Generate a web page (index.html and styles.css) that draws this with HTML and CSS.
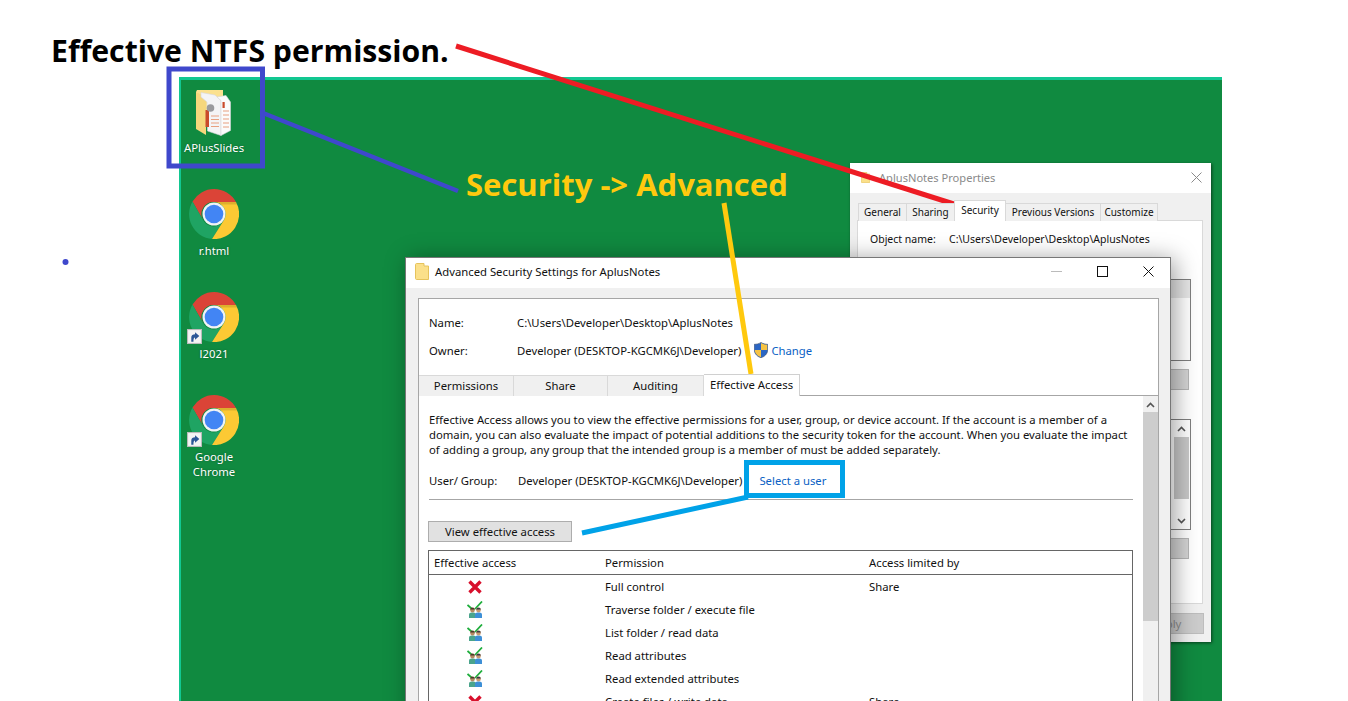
FILE: index.html
```html
<!DOCTYPE html>
<html lang="en">
<head>
<meta charset="utf-8">
<title>Effective NTFS permission</title>
<link rel="stylesheet" href="styles.css">
</head>
<body>
<svg class="defs" width="0" height="0" aria-hidden="true">
  <defs>
    <symbol id="chrome" viewBox="0 0 50 50">
      <path fill="#db4437" d="M25 0A25 25 0 0 1 47 13H25A12 12 0 0 0 14 31L3.5 12.5A25 25 0 0 1 25 0Z"/>
      <path fill="#1fa463" d="M3.5 12.500A25 25 0 0 0 23 50L33 34A12 12 0 0 1 14 31Z"/>
      <path fill="#fcc934" d="M47 13A25 25 0 0 1 23 50L35 31A12 12 0 0 0 25 13Z"/>
      <path fill="#000" opacity=".12" d="M25 13H47L48 15.500H32Z"/>
      <circle cx="25" cy="25" r="11.500" fill="#f1f3f4"/>
      <circle cx="25" cy="25" r="9.300" fill="#4285f4"/>
    </symbol>
    <symbol id="shortcut" viewBox="0 0 14 14">
      <rect x=".5" y=".5" width="13" height="13" fill="#f4f4f4" stroke="#bbb"/>
      <path fill="#2b5797" d="M4 12V8C4 6 5.500 5 7.500 5V3L11.500 6.500L7.500 10V8C6.500 8 6 9 6 12Z"/>
    </symbol>
    <symbol id="deny" viewBox="0 0 14 14">
      <path fill="none" stroke="#d8102c" stroke-width="3.400" d="M1.500 1.500L12.500 12.500M12.500 1.500L1.500 12.500"/>
    </symbol>
    <symbol id="allow" viewBox="0 0 16 17">
      <path fill="none" stroke="#1fae3c" stroke-width="1.800" d="M.5 4L4.500 7.500M8 8L15 .5"/>
      <path fill="#4aa48c" d="M2 17V13.500C2 12 3.500 11.500 5.500 11.500S9 12 9 13.500V17Z"/>
      <path fill="#3d8fd6" d="M8 17V13.500C8 12 9.500 11.500 11.500 11.500S15 12 15 13.500V17Z"/>
      <circle cx="5.500" cy="9" r="2.400" fill="#b58a62"/>
      <path fill="#4a3a2c" d="M3.200 8.500C3.200 6 7.800 6 7.800 8.500Z"/>
      <circle cx="11.500" cy="9" r="2.400" fill="#c79a70"/>
      <path fill="#3a3a46" d="M9.200 8.500C9.200 6 13.800 6 13.800 8.500Z"/>
    </symbol>
    <symbol id="folder-small" viewBox="0 0 14 17">
      <path fill="#fbe08a" stroke="#e6c35c" d="M.5 1.500C.5 1 1 .5 1.500 .5H9V3H13.500V16.500H1.500C1 16.500 .5 16 .5 15.500Z"/>
    </symbol>
  </defs>
</svg>

<main class="slide">
  <h1 class="headline">Effective NTFS permission.</h1>

  <section class="desktop">
    <ul class="icons">
      <li class="icon icon-folder">
        <svg class="folder-art" viewBox="0 0 36 46" width="36" height="46" aria-hidden="true">
          <path fill="#fbe18f" d="M0 2L1 0H27V33H0Z"/>
          <path fill="#f6d77c" d="M0 2L10 7V45L0 39Z"/>
          <path fill="#f4f4f6" stroke="#d6d6da" stroke-width=".6" d="M5 2.500L19 5L25 10.500V45.500L11.500 41L11 12L5 7Z"/>
          <path fill="#fbfbfb" stroke="#d6d6da" stroke-width=".6" d="M21 7L30 5.500L34.500 12V40.500L25 45.500V10.500Z"/>
          <rect x="9.500" y="20" width="3.500" height="17" fill="#c94a2c"/>
          <circle cx="14.500" cy="18" r="3.800" fill="#9a9a9e"/>
          <path stroke="#e8a080" stroke-width="1.100" d="M15 26H23M15 29.500H23M15 33H23M15 36.500H23M27 21H33M27 25H33M27 29H33M27 33H33M27 37H33"/>
          <rect x="26.500" y="12" width="2.200" height="6" fill="#c94a2c"/>
        </svg>
        <span class="icon-label">APlusSlides</span>
      </li>
      <li class="icon">
        <svg class="chrome-art"><use href="#chrome"/></svg>
        <span class="icon-label">r.html</span>
      </li>
      <li class="icon">
        <svg class="chrome-art"><use href="#chrome"/></svg>
        <svg class="shortcut"><use href="#shortcut"/></svg>
        <span class="icon-label">l2021</span>
      </li>
      <li class="icon">
        <svg class="chrome-art"><use href="#chrome"/></svg>
        <svg class="shortcut"><use href="#shortcut"/></svg>
        <span class="icon-label">Google<br>Chrome</span>
      </li>
    </ul>

    <article class="window props">
      <header class="titlebar props-bar">
        <svg class="props-folder"><use href="#folder-small"/></svg>
        <span class="props-title">AplusNotes Properties</span>
        <svg class="props-close" viewBox="0 0 11 11"><path d="M.5 .5L10.500 10.500M10.500 .5L.5 10.500"/></svg>
      </header>
      <div class="props-body">
        <nav class="props-tabs">
          <span class="ptab ptab-general">General</span>
          <span class="ptab ptab-sharing">Sharing</span>
          <span class="ptab ptab-security">Security</span>
          <span class="ptab ptab-previous">Previous Versions</span>
          <span class="ptab ptab-customize">Customize</span>
        </nav>
        <div class="props-panel">
          <p class="object-row"><span class="object-label">Object name:</span><span>C:\Users\Developer\Desktop\AplusNotes</span></p>
          <div class="ghost ghost-list1"><div class="ghost-head"></div></div>
          <div class="ghost-btn ghost-btn1"></div>
          <div class="ghost ghost-list2">
            <div class="ghost-scroll">
              <svg class="chev" viewBox="0 0 9 6"><path d="M1 5L4.500 1.500L8 5"/></svg>
              <div class="ghost-thumb"></div>
              <svg class="chev chev-down" viewBox="0 0 9 6"><path d="M1 1L4.500 4.500L8 1"/></svg>
            </div>
          </div>
          <div class="ghost-btn ghost-btn2"></div>
        </div>
        <div class="props-foot"><span class="apply">Apply</span></div>
      </div>
    </article>

    <article class="window adv">
      <header class="titlebar adv-bar">
        <svg class="adv-folder"><use href="#folder-small"/></svg>
        <span class="adv-title">Advanced Security Settings for AplusNotes</span>
        <span class="controls">
          <svg viewBox="0 0 11 11"><path class="ctl-min" d="M0 5.500H11"/></svg>
          <svg viewBox="0 0 11 11"><rect x=".5" y=".5" width="10" height="10"/></svg>
          <svg viewBox="0 0 11 11"><path d="M.5 .5L10.500 10.500M10.500 .5L.5 10.500"/></svg>
        </span>
      </header>
      <div class="adv-body">
        <div class="adv-sheet">
          <div class="meta">
            <div class="meta-row"><span class="meta-label">Name:</span><span>C:\Users\Developer\Desktop\AplusNotes</span></div>
            <div class="meta-row"><span class="meta-label">Owner:</span><span>Developer (DESKTOP-KGCMK6J\Developer)</span>
              <svg class="shield" viewBox="0 0 14 16" aria-hidden="true">
                <path fill="#2b66c4" stroke="#3a4a66" stroke-width=".6" d="M7 .4C9 1.800 11.500 2.300 13.700 2.300V8C13.700 12 10 15 7 15.700C4 15 .3 12 .3 8V2.300C2.500 2.300 5 1.800 7 .4Z"/>
                <path fill="#f6c343" d="M7 1C9 2.200 11 2.700 13.200 2.800V8H7ZM7 8V15.200C4.500 14.500 .8 12 .8 8Z"/>
              </svg>
              <a class="link change">Change</a>
            </div>
          </div>
          <nav class="adv-tabs">
            <span class="atab atab-perm">Permissions</span>
            <span class="atab atab-share">Share</span>
            <span class="atab atab-audit">Auditing</span>
            <span class="atab atab-eff">Effective Access</span>
          </nav>
          <div class="pane">
            <div class="pane-main">
              <p class="intro">Effective Access allows you to view the effective permissions for a user, group, or device account. If the account is a member of a<br>domain, you can also evaluate the impact of potential additions to the security token for the account. When you evaluate the impact<br>of adding a group, any group that the intended group is a member of must be added separately.</p>
              <div class="user-row">
                <span class="user-label">User/ Group:</span>
                <span>Developer (DESKTOP-KGCMK6J\Developer)</span>
                <a class="link select-user">Select a user</a>
              </div>
              <button class="view-btn" type="button">View effective access</button>
              <div class="grid-table">
                <div class="grid-row grid-head"><span>Effective access</span><span>Permission</span><span>Access limited by</span></div>
                <div class="grid-row"><span class="state"><svg class="mark-deny"><use href="#deny"/></svg></span><span>Full control</span><span>Share</span></div>
                <div class="grid-row"><span class="state"><svg class="mark-allow"><use href="#allow"/></svg></span><span>Traverse folder / execute file</span><span></span></div>
                <div class="grid-row"><span class="state"><svg class="mark-allow"><use href="#allow"/></svg></span><span>List folder / read data</span><span></span></div>
                <div class="grid-row"><span class="state"><svg class="mark-allow"><use href="#allow"/></svg></span><span>Read attributes</span><span></span></div>
                <div class="grid-row"><span class="state"><svg class="mark-allow"><use href="#allow"/></svg></span><span>Read extended attributes</span><span></span></div>
                <div class="grid-row"><span class="state"><svg class="mark-deny"><use href="#deny"/></svg></span><span>Create files / write data</span><span>Share</span></div>
              </div>
            </div>
            <div class="scrollbar">
              <svg class="chev" viewBox="0 0 9 6"><path d="M1 5L4.500 1.500L8 5"/></svg>
              <div class="scroll-thumb"></div>
            </div>
          </div>
        </div>
      </div>
    </article>
  </section>

  <svg class="marks" viewBox="0 0 1348 701" width="1348" height="701" aria-hidden="true">
    <rect class="mark-blue" x="169" y="69" width="93.500" height="97"/>
    <line class="mark-blue" x1="263" y1="113" x2="458" y2="191"/>
    <line class="mark-red" x1="456" y1="46" x2="957" y2="205"/>
    <line class="mark-yellow" x1="724" y1="203" x2="751" y2="374"/>
    <rect class="mark-cyan" x="746.500" y="462.500" width="96" height="33"/>
    <line class="mark-cyan" x1="748" y1="497" x2="582" y2="533"/>
    <circle class="dot" cx="65.500" cy="262" r="3"/>
  </svg>
  <p class="callout">Security -&gt; Advanced</p>
</main>
</body>
</html>
```
FILE: styles.css
```css
* { box-sizing: border-box; }
html, body { margin: 0; background: #fff; }
body { font-family: "Noto Sans", "Open Sans", sans-serif; font-size: 11.3px; color: #111; }
.defs { position: absolute; }
p { margin: 0; }
ul { list-style: none; margin: 0; padding: 0; }

.slide { position: relative; width: 1348px; height: 701px; overflow: hidden; background: #fff; }
.headline {
  margin: 0; height: 77px; padding: 30px 0 0 51px;
  font: 700 30.2px/42px "Open Sans", sans-serif; color: #000; white-space: nowrap;
}

.desktop {
  position: relative; margin-left: 179px; width: 1043px; height: 624px; overflow: hidden;
  background: #108a40; box-shadow: inset 2px 3px 0 #12c791;
}

.icons { display: flex; flex-direction: column; width: 70px; padding-top: 13px; }
.icon { position: relative; display: flex; flex-direction: column; align-items: center; height: 103px; color: #fff; text-align: center; line-height: 15px; }
.icon-folder { height: 99px; }
.icon-label { margin-top: 4px; white-space: nowrap; text-shadow: 0 0 2px rgba(0,0,0,.35); }
.chrome-art { width: 50px; height: 50px; flex: none; }
.shortcut { position: absolute; left: 8px; top: 37px; width: 15px; height: 15px; }

.window { position: absolute; background: #fff; }
.titlebar { display: flex; align-items: center; background: #fff; }

.props { left: 671px; top: 86px; width: 361px; height: 479px; box-shadow: 1px 1px 3px rgba(0,0,0,.55); display: flex; flex-direction: column; }
.props-bar { height: 30px; padding-left: 11px; padding-bottom: 1px; flex: none; }
.props-folder { width: 9px; height: 11px; }
.props-title { margin-left: 9px; font-size: 11.1px; color: #8a8a8a; }
.props-close { width: 11px; height: 11px; margin-left: auto; margin-right: 9px; fill: none; stroke: #8a8a8a; }
.props-body { flex: 1; background: #f0f0f0; padding: 7px 8px 0 7px; display: flex; flex-direction: column; }
.props-tabs { display: flex; align-items: flex-end; height: 21px; padding-left: 1px; position: relative; z-index: 1; margin-bottom: -1px; flex: none; font-size: 10px; }
.ptab { height: 18px; padding-bottom: 2px; background: #f0f0f0; border: 1px solid #d9d9d9; border-bottom: 0; border-right: 0; display: flex; align-items: center; justify-content: center; white-space: nowrap; }
.ptab-general { width: 48px; }
.ptab-sharing { width: 48px; }
.ptab-security { width: 52px; height: 21px; background: #fff; border-right: 1px solid #d9d9d9; padding-bottom: 3px; }
.ptab-previous { width: 94px; border-left: 0; }
.ptab-customize { width: 58px; border-right: 1px solid #d9d9d9; }
.props-panel { position: relative; height: 384px; background: #fff; border: 1px solid #d9d9d9; flex: none; }
.object-row { display: flex; padding: 10px 0 0 12px; line-height: 17px; font-size: 10.5px; white-space: nowrap; }
.object-label { width: 79px; }
.ghost { position: absolute; left: 10px; right: 11px; border: 1px solid #7f7f7f; }
.ghost-list1 { top: 58px; height: 82px; }
.ghost-head { height: 18px; background: #e6e6e6; }
.ghost-btn { position: absolute; right: 13px; width: 100px; height: 21px; background: #d4d4d4; border: 1px solid #b5b5b5; }
.ghost-btn1 { top: 148px; }
.ghost-btn2 { top: 317px; }
.ghost-list2 { top: 198px; height: 111px; }
.ghost-scroll { position: absolute; right: 0; top: 0; bottom: 0; width: 17px; display: flex; flex-direction: column; align-items: center; padding: 6px 0 5px; }
.ghost-thumb { width: 15px; height: 62px; margin-top: 5px; background: #c8c8c8; }
.chev { width: 9px; height: 6px; flex: none; fill: none; stroke: #555; stroke-width: 1.6; }
.chev-down { margin-top: auto; }
.props-foot { flex: 1; display: flex; justify-content: flex-end; align-items: flex-start; padding: 9px 0 0; }
.apply { width: 75px; height: 21px; background: #cccccc; border: 1px solid #bdbdbd; color: #8c8c8c; display: flex; align-items: center; justify-content: center; margin-right: -1px; }

.adv { left: 226px; top: 180px; width: 766px; height: 500px; border: 1px solid #777; border-bottom: 0; box-shadow: 4px 2px 22px rgba(0,0,0,.38); display: flex; flex-direction: column; }
.adv-bar { height: 30px; padding-left: 9px; padding-bottom: 4px; flex: none; }
.adv-folder { width: 14px; height: 17px; }
.adv-title { margin-left: 6px; white-space: nowrap; }
.controls { margin-left: auto; display: flex; gap: 35px; padding-right: 16px; }
.controls svg { width: 11px; height: 11px; fill: none; stroke: #111; }
.controls .ctl-min { stroke: #bbb; }
.adv-body { flex: 1; background: #f0f0f0; padding: 10px 11px 0 12px; }
.adv-sheet { background: #fff; border: 1px solid #a6a6a6; height: 460px; }
.meta { height: 74px; padding: 9px 0 0 10px; }
.meta-row { display: flex; align-items: center; height: 28px; white-space: nowrap; }
.meta-label { width: 88px; }
.shield { width: 14px; height: 16px; margin-left: 13px; }
.link { color: #0a5fc4; }
.change { margin-left: 3px; }
.adv-tabs { display: flex; align-items: flex-end; height: 23px; margin-bottom: -1px; position: relative; z-index: 1; }
.atab { height: 21px; padding-bottom: 2px; background: #f0f0f0; border: 1px solid #d9d9d9; border-bottom: 0; border-left: 0; display: flex; align-items: center; justify-content: center; white-space: nowrap; }
.atab-perm { width: 95px; }
.atab-share { width: 94px; }
.atab-audit { width: 96px; }
.atab-eff { width: 96px; height: 22px; background: #fff; border-color: #d0d0d0; }
.pane { display: flex; border-top: 1px solid #a6a6a6; height: 360px; }
.pane-main { width: 724px; padding: 16px 0 0 10px; flex: none; }
.intro { line-height: 15px; white-space: nowrap; }
.user-row { display: flex; align-items: center; height: 43px; width: 704px; padding-top: 4px; border-bottom: 1px solid #a6a6a6; white-space: nowrap; }
.user-label { width: 89px; }
.select-user { margin-left: 17px; }
.view-btn { display: block; margin: 21px 0 0 -1px; width: 144px; height: 21px; padding: 0; background: #e1e1e1; border: 1px solid #adadad; border-radius: 0; font: inherit; color: #111; }
.grid-table { margin: 8px 0 0 -1px; width: 705px; border: 1px solid #666; border-bottom: 0; }
.grid-row { display: grid; grid-template-columns: 171px 264px 1fr; height: 23px; align-items: center; padding-left: 5px; white-space: nowrap; }
.grid-head { border-bottom: 1px solid #666; height: 24px; }
.state { display: flex; padding-left: 34px; }
.mark-deny { width: 14px; height: 14px; }
.mark-allow { width: 16px; height: 17px; margin-left: -1px; }
.scrollbar { width: 15px; background: #f0f0f0; display: flex; flex-direction: column; align-items: center; padding-top: 6px; flex: none; }
.scroll-thumb { width: 15px; height: 209px; margin-top: 4px; background: #cdcdcd; }

.marks { position: absolute; left: 0; top: 0; pointer-events: none; }
.marks rect, .marks line { fill: none; }
.mark-blue { stroke: #3f48cc; stroke-width: 4.500; }
.marks rect.mark-blue { stroke-width: 5; }
.mark-red { stroke: #ed1c24; stroke-width: 5; }
.mark-yellow { stroke: #ffc90e; stroke-width: 5; }
.mark-cyan { stroke: #00a2e8; stroke-width: 5; }
.marks rect.mark-cyan { stroke-width: 5; }
.dot { fill: #3f48cc; }
.callout {
  position: absolute; left: 466px; top: 163px; margin: 0;
  font: 700 31px/42px "Open Sans", sans-serif; color: #ffc90e; white-space: nowrap;
}
```
